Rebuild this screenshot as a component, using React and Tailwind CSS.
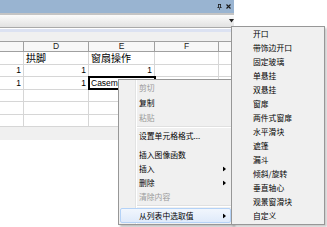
import React from 'react'

const COLS = [24, 65, 66, 64, 15]
const CJK = { fontFamily: '"Noto Sans CJK SC", "Liberation Sans", sans-serif' }
const LAT = { fontFamily: '"Liberation Sans", "Noto Sans CJK SC", sans-serif' }

const ROWS = [
  ['', '拱脚', '窗扇操作', '', ''],
  ['1', '1', '1', '', ''],
  ['1', '1', 'Casement', '', ''],
  ['', '', '', '', ''],
  ['', '', '', '', ''],
  ['', '', '', '', ''],
]

const MENU = [
  { label: '剪切', off: true },
  { label: '复制' },
  { label: '粘贴', off: true },
  { sep: true },
  { label: '设置单元格格式...' },
  { gap: true },
  { label: '插入图像函数' },
  { label: '插入', sub: true },
  { label: '删除', sub: true },
  { label: '清除内容', off: true },
  { sep: true },
  { label: '从列表中选取值', sub: true, hot: true },
]

const SUBMENU = [
  '开口', '带饰边开口', '固定玻璃', '单悬挂', '双悬挂', '窗扉', '两件式窗扉',
  '水平滑块', '遮篷', '漏斗', '倾斜/旋转', '垂直轴心', '观景窗滑块', '自定义',
]

function Cell({ w, text, idx, last }) {
  const isNum = /^\d+$/.test(text)
  const latin = isNum || idx === 2
  return (
    <div
      className={`h-full shrink-0 flex items-center px-[2px] whitespace-nowrap text-black ${latin ? 'text-[8.5px] leading-[10px]' : 'text-[10px] leading-[12px]'} ${last ? '' : 'border-r border-[#d6d6d6]'} ${isNum ? 'justify-end' : 'justify-start'}`}
      style={{ width: w, ...(latin ? LAT : CJK) }}
    >
      {text}
    </div>
  )
}

function Arrow() {
  return (
    <svg width="3" height="5" viewBox="0 0 3 5" className="absolute right-[6px] top-1/2 -translate-y-1/2">
      <path d="M0 0 L3 2.5 L0 5 Z" fill="#000" />
    </svg>
  )
}

export default function App() {
  return (
    <div className="relative w-[327px] h-[227px] overflow-hidden bg-white">
      {/* panel */}
      <div className="flex flex-col w-[234px]">
        <div className="h-[13px] bg-[#99b4d1] flex items-center justify-end gap-[4px] pr-[3px]">
          <svg width="5" height="6" viewBox="0 0 5 6">
            <path d="M1 0 H4 V3.5 H5 V4 H0 V3.5 H1 Z M2.2 4 V6 H2.8 V4 Z" fill="#1a1a1a" />
            <rect x="1.8" y="0.8" width="1.4" height="2.7" fill="#99b4d1" />
          </svg>
          <svg width="5" height="5" viewBox="0 0 5 5">
            <path d="M0.5 0.5 L4.5 4.5 M4.5 0.5 L0.5 4.5" stroke="#1a1a1a" strokeWidth="1.1" />
          </svg>
        </div>
        <div className="h-[2px] bg-[#c4c4c4]" />
        <div className="h-[12px] bg-gradient-to-b from-[#fbfbfb] to-[#e2e2e2] flex items-center justify-end">
          <svg width="5" height="4" viewBox="0 0 5 4">
            <path d="M0 0 H5 L2.5 3.5 Z" fill="#222" />
          </svg>
        </div>
        <div className="h-[1px] bg-[#a9a9a9]" />
        <div className="h-[1px] bg-white" />
        <div className="h-[3px] bg-[#dce2f2]" />
        <div className="h-[9px] bg-[#f0f0f0]" />

        {/* grid header */}
        <div className="flex h-[11px] bg-[#f7f7f7] border-t border-b border-[#a0a0a0]">
          {['', 'D', 'E', 'F', ''].map((t, i) => (
            <div
              key={i}
              className={`h-full shrink-0 flex items-center justify-center text-[8.5px] leading-none text-[#222] ${i < 4 ? 'border-r border-[#a0a0a0]' : ''}`}
              style={{ width: COLS[i], ...LAT }}
            >
              {t}
            </div>
          ))}
        </div>

        {/* grid rows */}
        {ROWS.map((r, ri) => (
          <div key={ri} className="relative flex h-[12.5px] border-b border-[#d6d6d6] bg-white">
            {r.map((t, ci) => (
              <Cell key={ci} w={COLS[ci]} text={t} idx={ri} last={ci === 4} />
            ))}
            {ri === 2 && (
              <div className="absolute left-[88px] top-[-1px] w-[68px] h-[14px] border-2 border-black" />
            )}
          </div>
        ))}
        <div className="h-[13px] bg-[#f0f0f0]" />
      </div>

      {/* context menu */}
      <div
        className="absolute left-[118px] top-[79px] w-[115px] h-[146px] bg-[#f0f0f0] border border-[#979797] shadow-[2px_2px_2px_rgba(0,0,0,0.25)] flex flex-col"
        style={CJK}
      >
        <div className="absolute left-[16px] top-0 bottom-0 w-[1px] bg-[#e2e3e3]" />
        <div className="absolute left-[17px] top-0 bottom-0 w-[1px] bg-white" />
        {MENU.map((m, i) => {
          if (m.sep)
            return (
              <div key={i} className="h-[4px] flex flex-col justify-center pl-[18px] pr-[1px]">
                <div className="h-[1px] bg-[#e0e0e0]" />
                <div className="h-[1px] bg-white" />
              </div>
            )
          if (m.gap) return <div key={i} className="h-[5px]" />
          const h = i < 3 || m.hot ? 'h-[15px]' : 'h-[14px]'
          return (
            <div key={i} className={`relative ${h} flex items-center pl-[20px] text-[7.8px] leading-[10px] ${m.off ? 'text-[#9a9a9a]' : 'text-black'}`}>
              {m.hot && (
                <div className="absolute left-[1px] right-[1px] top-0 bottom-0 rounded-[2px] border border-[#b4d2f7] bg-gradient-to-b from-[#f1f6fd] to-[#dfeafa]" />
              )}
              <span className="relative">{m.label}</span>
              {m.sub && <Arrow />}
            </div>
          )
        })}
      </div>

      {/* submenu */}
      <div
        className="absolute left-[231px] top-[26px] w-[94px] h-[199px] bg-[#f0f0f0] border border-[#979797] shadow-[2px_2px_2px_rgba(0,0,0,0.2)] flex flex-col"
        style={CJK}
      >
        {SUBMENU.map((s) => (
          <div key={s} className="h-[14px] shrink-0 flex items-center pl-[21px] text-[7.8px] leading-[10px] text-black">
            {s}
          </div>
        ))}
      </div>
    </div>
  )
}
